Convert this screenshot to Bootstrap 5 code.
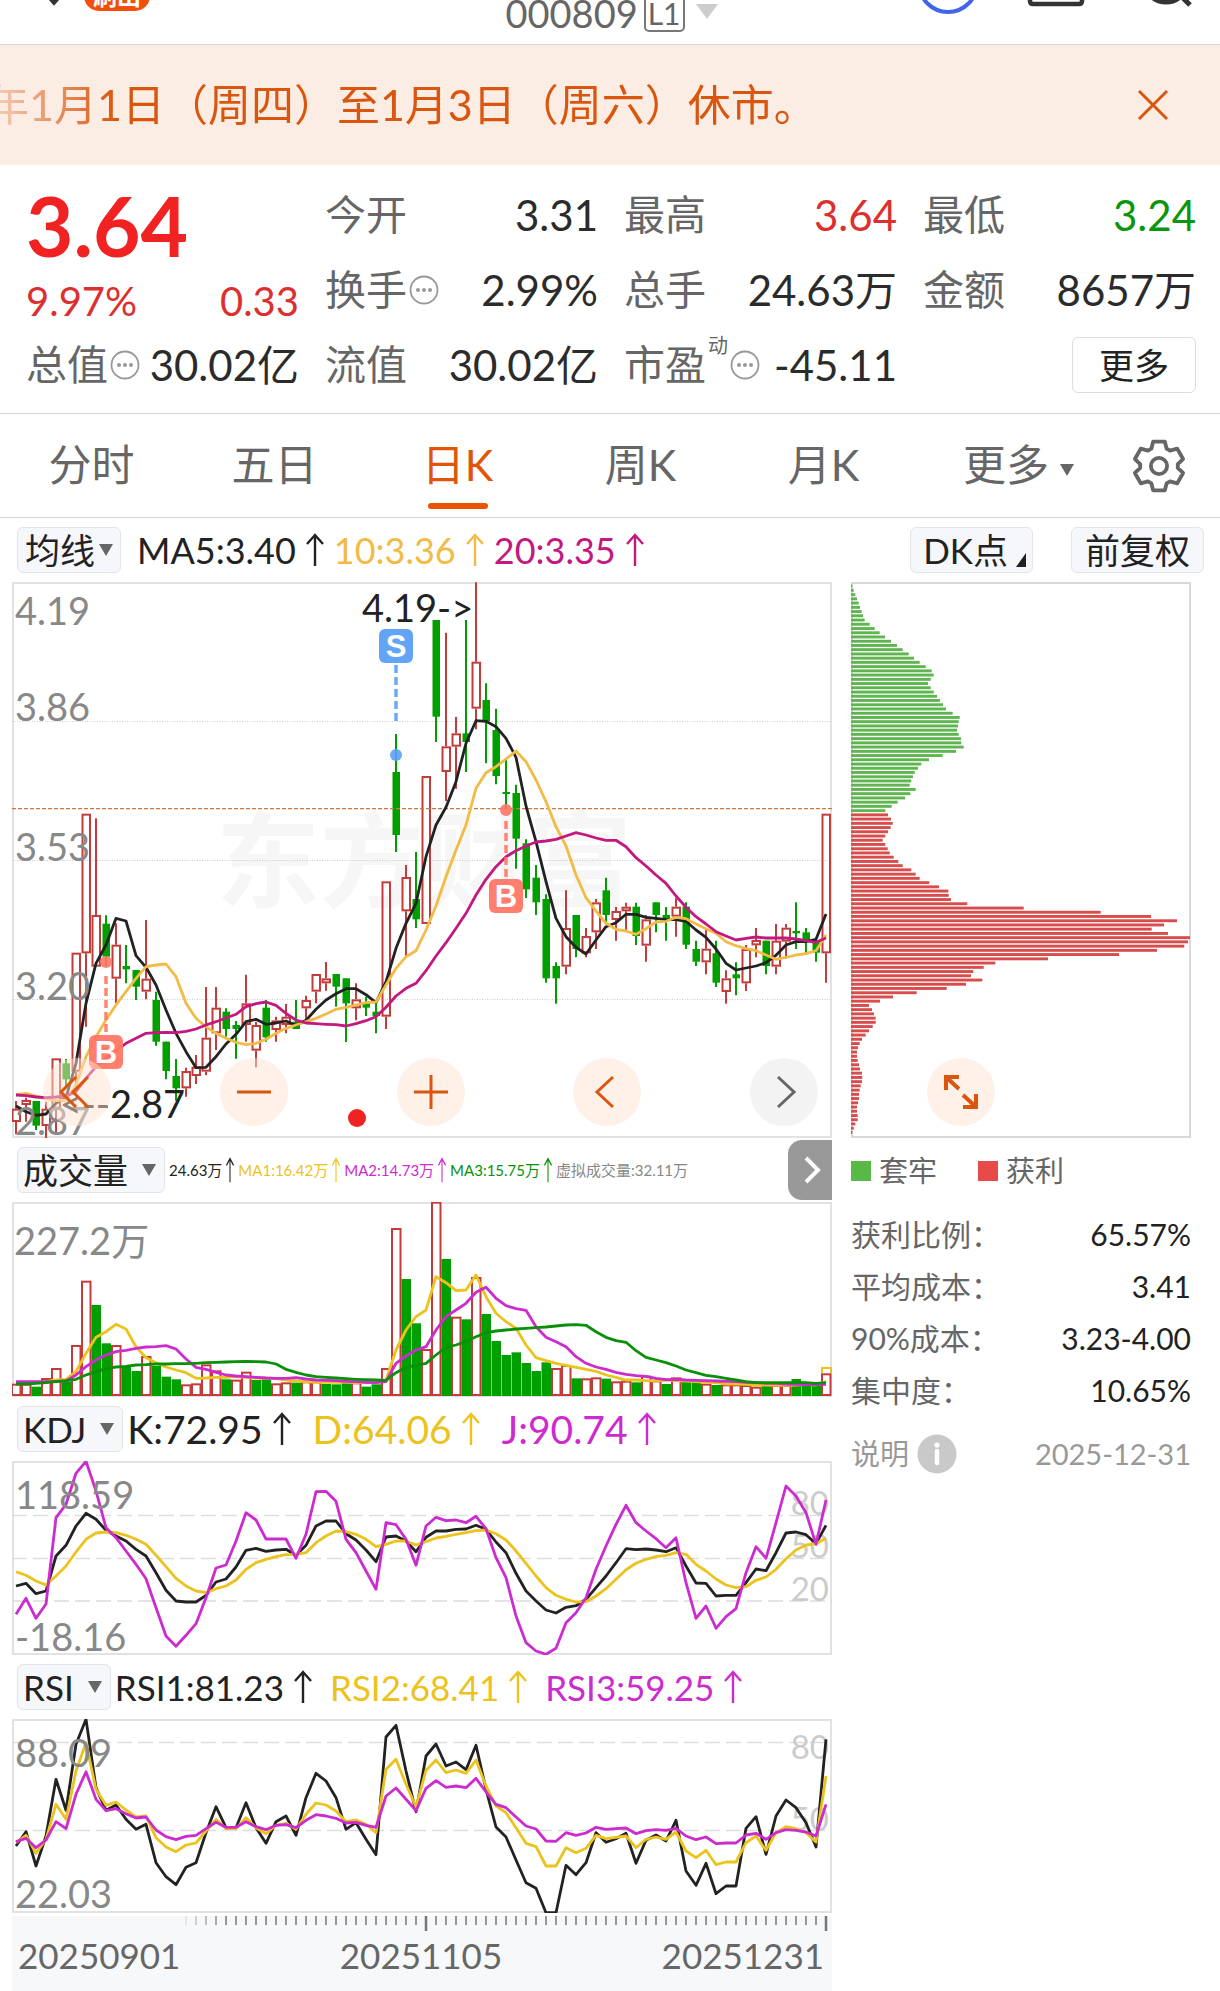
<!DOCTYPE html>
<html lang="zh-CN">
<head>
<meta charset="utf-8">
<meta name="viewport" content="width=device-width, initial-scale=1">
<title>000809 日K</title>
<link href="https://cdn.jsdelivr.net/npm/bootstrap@5.3.0/dist/css/bootstrap.min.css" rel="stylesheet">
<style>
body{font-family:Lato,"Noto Sans CJK SC",sans-serif;color:#222;background:#fff;overflow-x:hidden}
button{font-family:inherit}
svg{display:block}
.topbar{height:45px;border-bottom:1px solid #d5d5d5;overflow:hidden;position:relative}
.topbar .inner{height:60px;margin-top:-17px}
.plain{background:none;border:0;padding:0;color:inherit}
.code-btn{font-size:38px;line-height:60px;color:#666;gap:6px;padding-left:6px}
.lv{font-size:30px;line-height:34px;border:2px solid #777;border-radius:5px;padding:0 2px}
.hot-pill{background:#f2500a;color:#fff;font-size:24px;line-height:30px;border-radius:15px;padding:0 9px;font-weight:700}
.side-l{left:0;top:0;padding-left:20px;height:31px}
.side-r{right:28px;top:0}
.notice{height:120px;background:#fcede4;color:#d9560f}
.notice-text{font-size:43px;line-height:60px;margin-left:-14px;white-space:nowrap;overflow:hidden;-webkit-mask-image:linear-gradient(90deg,rgba(0,0,0,.15),#000 130px);mask-image:linear-gradient(90deg,rgba(0,0,0,.15),#000 130px)}
.close-x{margin-right:47px}
.quote{padding:12px 24px 11px 26px;border-bottom:1px solid #d5d5d5}
.q-grid{display:grid;grid-template-columns:repeat(4,1fr);column-gap:26px;grid-auto-rows:75px}
.cell{display:flex;align-items:center;justify-content:space-between;white-space:nowrap}
.lab{font-size:41px;line-height:60px;color:#666;display:flex;align-items:center;gap:2px}
.lab sup{font-size:20px;top:-20px;line-height:20px}
.val{font-size:42px;line-height:60px;color:#2b2b2b}
.up{color:#dc2f2f}
.down{color:#0a960a}
.big-price{grid-row:span 2;display:flex;flex-direction:column;color:#dc2f2f;font-size:40px;line-height:56px}
.big-price strong{font-size:82px;line-height:96px;color:#f02222;font-weight:700}
.more-btn{width:124px;height:56px;border:1px solid #ddd;border-radius:6px;font-size:35px;line-height:50px;background:#fff;padding:0;color:#222}
.k-tabs{height:104px;border-bottom:1px solid #d5d5d5}
.k-tabs a{width:15%;height:103px;font-size:43px;line-height:102px;color:#666;text-align:center;text-decoration:none;position:relative;white-space:nowrap}
.k-tabs a.active{color:#df560a}
.k-tabs a.active::after{content:"";position:absolute;left:50%;margin-left:-30px;bottom:8px;width:60px;height:6px;border-radius:3px;background:#e85404}
.caret{display:inline-block;border:7px solid transparent;border-top:12px solid #666;border-bottom:0;vertical-align:middle}
.gear{width:52px;margin:0 36px 0 auto}
.ma-row{height:64px;padding:0 16px 0 17px}
.chip{height:46px;border:1px solid #e2e4e8;border-radius:6px;background:#f6f7fa;font-size:35px;line-height:42px;padding:0 7px;color:#222;display:flex;align-items:center;white-space:nowrap;gap:4px}
.chip.wide{gap:14px;padding:0 8px 0 5px}
.chip.vol-chip{gap:14px;padding:0 8px 0 5px}
.chip.dk{gap:8px;padding:0 6px 0 12px}
.chip.adj{padding:0 13px}
.corner{width:10px;height:14px;background:#222;clip-path:polygon(100% 0,100% 100%,0 100%);align-self:flex-end;margin-bottom:5px}
.ind{display:flex;align-items:center;white-space:nowrap;gap:10px}
.ind svg{width:18px;height:34px}
.f36{font-size:36px;line-height:46px}
.f38{font-size:39px;line-height:46px}
.f38 .c-yel:not(svg),.f38 .c-pur:not(svg){margin-left:12px}
.f34{font-size:35px;line-height:46px}
.f34 .c-yel:not(svg),.f34 .c-pur:not(svg){margin-left:8px}
.f16{font-size:15px;line-height:46px}
.f16.ind{gap:4px}
.f16 svg{width:8px;height:26px}
.c-gold{color:#f2bb45}.c-mag{color:#c2187f}.c-yel{color:#ecc21c}.c-pur{color:#cc2bd0}.c-grn{color:#089108}.c-gry{color:#888}
.board{display:grid;grid-template-columns:820fr 340fr;column-gap:19px;padding:0 29px 0 12px}
.pane{position:relative}
.pane svg.plot{width:100%;height:auto}
.ind-row{height:64px;padding-left:5px;position:relative}
.slide-btn{right:0;top:2px;width:44px;height:60px;border:0;border-radius:14px 0 0 14px;background:#999;padding:0 0 0 8px;position:absolute}
.tools{position:absolute;left:0;right:0;bottom:12px;padding:0 14px 0 31px}
.round{width:68px;height:68px;border:0;padding:0;border-radius:50%;background:rgba(255,226,209,.5);color:#d9560f;display:flex;align-items:center;justify-content:center}
.round.off{background:#f3f3f3;color:#666}
.expand{position:absolute;left:76px;bottom:12px}
.live-dot{position:absolute;width:18px;height:18px;border-radius:50%;background:#f02222;left:336px;bottom:11px}
.axis-lab{font-size:38px;fill:#888}
.lvl{font-size:33px;fill:#ccc;text-anchor:end}
.note{font-size:38px;fill:#222}
.flag{font:700 31px "Liberation Sans",sans-serif;fill:#fff;text-anchor:middle}
.wm{font-size:104px;font-weight:700;fill:#f6f6f6}
.dates{background:#f7f8fa;margin-top:3px}
.dates .nums{font-size:35px;line-height:46px;color:#666;padding:0 8px 14px 6px}
.legend-row{height:66px;font-size:29px;line-height:40px;color:#666}
.sw{width:20px;height:20px;margin-right:8px}
.sw-loss{background:#58b947}
.sw-gain{background:#e84a4a;margin-left:41px}
.stat{height:52px;font-size:30px;line-height:40px;color:#666;white-space:nowrap}
.stat dd{color:#222;margin:0}
.stat dt{font-weight:400}
.foot{height:74px;font-size:29px;line-height:40px;color:#999;padding-top:2px}
</style>
<script src="https://cdn.jsdelivr.net/npm/bootstrap@5.3.0/dist/js/bootstrap.bundle.min.js"></script>
</head>
<body>
<svg width="0" height="0" class="position-absolute" aria-hidden="true">
<symbol id="up" viewBox="0 0 18 34" preserveAspectRatio="none"><path d="M9 33V2M1 11L9 2l8 9" fill="none" stroke="currentColor" stroke-width="2.4"/></symbol>
<symbol id="dots" viewBox="0 0 30 30"><circle cx="15" cy="15" r="13.5" fill="none" stroke="#999" stroke-width="1.8"/><g fill="#999"><circle cx="9" cy="15" r="2"/><circle cx="15" cy="15" r="2"/><circle cx="21" cy="15" r="2"/></g></symbol>
</svg>

<header class="topbar">
  <div class="side-l position-absolute d-flex align-items-start">
    <svg width="64" height="20" viewBox="0 0 64 20"><path d="M20 -14L34 2L48 -14" fill="none" stroke="#333" stroke-width="5"/></svg>
    <span class="hot-pill" style="margin-top:-19px">刷出</span>
  </div>
  <div class="inner d-flex justify-content-center">
    <button class="plain code-btn d-flex align-items-center"><span>000809</span><span class="lv">L1</span>
      <svg width="30" height="18" viewBox="0 0 30 18"><path d="M5 0h22L16 15z" fill="#ccc"/></svg></button>
  </div>
  <div class="side-r position-absolute">
    <svg width="276" height="20" viewBox="916 0 276 20" fill="none"><circle cx="948" cy="-17" r="29" stroke="#3f66e8" stroke-width="4"/><path d="M1030 -20V1q0 3 3 3h46q3 0 3-3v-21" stroke="#333" stroke-width="4.500"/><circle cx="1166" cy="-20" r="22" stroke="#333" stroke-width="5"/><path d="M1180 -5l10 10" stroke="#333" stroke-width="5"/></svg>
  </div>
</header>

<section class="notice d-flex align-items-center justify-content-between" role="alert">
  <div class="notice-text">年1月1日（周四）至1月3日（周六）休市。</div>
  <button class="plain close-x" aria-label="关闭"><svg width="40" height="40" viewBox="0 0 40 40"><path d="M6 6l28 28M34 6L6 34" stroke="#d9560f" stroke-width="3"/></svg></button>
</section>

<section class="quote">
  <div class="q-grid">
    <div class="big-price"><strong>3.64</strong><div class="d-flex justify-content-between"><span>9.97%</span><span>0.33</span></div></div>
    <div class="cell"><span class="lab">今开</span><span class="val">3.31</span></div>
    <div class="cell"><span class="lab">最高</span><span class="val up">3.64</span></div>
    <div class="cell"><span class="lab">最低</span><span class="val down">3.24</span></div>
    <div class="cell"><span class="lab">换手<svg width="30" height="30"><use href="#dots"/></svg></span><span class="val">2.99%</span></div>
    <div class="cell"><span class="lab">总手</span><span class="val">24.63万</span></div>
    <div class="cell"><span class="lab">金额</span><span class="val">8657万</span></div>
    <div class="cell"><span class="lab">总值<svg width="30" height="30"><use href="#dots"/></svg></span><span class="val">30.02亿</span></div>
    <div class="cell"><span class="lab">流值</span><span class="val">30.02亿</span></div>
    <div class="cell"><span class="lab">市盈<sup>动</sup><svg width="30" height="30"><use href="#dots"/></svg></span><span class="val">-45.11</span></div>
    <div class="cell justify-content-end"><button class="more-btn">更多</button></div>
  </div>
</section>

<nav class="k-tabs d-flex align-items-center">
  <a href="#">分时</a><a href="#">五日</a><a href="#" class="active">日K</a><a href="#">周K</a><a href="#">月K</a><a href="#" class="ps-4">更多 <span class="caret"></span></a>
  <button class="plain gear" aria-label="设置"><svg width="54" height="54" viewBox="-12 -12 24 24" fill="none" stroke="#666" stroke-width="1.700" stroke-linejoin="round"><path d="M-2.600-10.800H2.600L3.400-7.700 4.900-6.800 8.100-7.700 10.700-3.100 8.350-.880V.880L10.700 3.100 8.100 7.700 4.900 6.800 3.400 7.700 2.600 10.800H-2.600L-3.400 7.700-4.900 6.800-8.100 7.700-10.700 3.100-8.350.880V-.880L-10.700-3.100-8.100-7.700-4.900-6.800-3.400-7.700z"/><circle r="3.600"/></svg></button>
</nav>

<div class="ma-row d-flex align-items-center">
  <button class="chip">均线<span class="caret"></span></button>
  <div class="ind f36 ms-3"><span>MA5:3.40</span><svg><use href="#up"/></svg><span class="c-gold">10:3.36</span><svg class="c-gold"><use href="#up"/></svg><span class="c-mag">20:3.35</span><svg class="c-mag"><use href="#up"/></svg></div>
  <div class="d-flex ms-auto" style="gap:38px"><button class="chip dk">DK点<span class="corner"></span></button><button class="chip adj">前复权</button></div>
</div>

<main class="board">
  <div>
    <div class="pane">
      <svg class="plot" id="price" viewBox="12 582 820 556"></svg>
      <div class="tools d-flex justify-content-between">
        <button class="round" aria-label="最早"><svg width="40" height="40" viewBox="0 0 40 40" fill="none" stroke="currentColor" stroke-width="3"><path d="M19 5L4 20l15 15M31 5L16 20l15 15"/></svg></button>
        <button class="round" aria-label="缩小"><svg width="40" height="40" viewBox="0 0 40 40" stroke="currentColor" stroke-width="3"><path d="M3 20h34"/></svg></button>
        <button class="round" aria-label="放大"><svg width="40" height="40" viewBox="0 0 40 40" stroke="currentColor" stroke-width="3"><path d="M3 20h34M20 3v34"/></svg></button>
        <button class="round" aria-label="向前"><svg width="40" height="40" viewBox="0 0 40 40" fill="none" stroke="currentColor" stroke-width="3"><path d="M26 5L10 20l16 15"/></svg></button>
        <button class="round off" aria-label="向后"><svg width="40" height="40" viewBox="0 0 40 40" fill="none" stroke="currentColor" stroke-width="3"><path d="M14 5l16 15-16 15"/></svg></button>
      </div>
      <span class="live-dot"></span>
    </div>
    <div class="ind-row d-flex align-items-center">
      <button class="chip vol-chip">成交量<span class="caret"></span></button>
      <div class="ind f16 ms-1"><span>24.63万</span><svg><use href="#up"/></svg><span class="c-yel">MA1:16.42万</span><svg class="c-yel"><use href="#up"/></svg><span class="c-pur">MA2:14.73万</span><svg class="c-pur"><use href="#up"/></svg><span class="c-grn">MA3:15.75万</span><svg class="c-grn"><use href="#up"/></svg><span class="c-gry">虚拟成交量:32.11万</span></div>
      <button class="slide-btn" aria-label="展开"><svg width="30" height="36" viewBox="0 0 30 36" fill="none" stroke="#fff" stroke-width="4"><path d="M10 6l12 12-12 12"/></svg></button>
    </div>
    <svg class="plot w-100 h-auto" id="vol" viewBox="12 1202 820 195"></svg>
    <div class="ind-row d-flex align-items-center">
      <button class="chip wide">KDJ<span class="caret"></span></button>
      <div class="ind f38 ms-1"><span>K:72.95</span><svg><use href="#up"/></svg><span class="c-yel">D:64.06</span><svg class="c-yel"><use href="#up"/></svg><span class="c-pur">J:90.74</span><svg class="c-pur"><use href="#up"/></svg></div>
    </div>
    <svg class="plot w-100 h-auto" id="kdj" viewBox="12 1460 820 194"></svg>
    <div class="ind-row d-flex align-items-center">
      <button class="chip wide">RSI<span class="caret"></span></button>
      <div class="ind f34 ms-1"><span>RSI1:81.23</span><svg><use href="#up"/></svg><span class="c-yel">RSI2:68.41</span><svg class="c-yel"><use href="#up"/></svg><span class="c-pur">RSI3:59.25</span><svg class="c-pur"><use href="#up"/></svg></div>
    </div>
    <svg class="plot w-100 h-auto" id="rsi" viewBox="12 1718 820 194"></svg>
    <div class="dates">
      <svg class="w-100 h-auto" id="ticks" viewBox="12 1915 820 16"></svg>
      <div class="nums d-flex justify-content-between"><span>20250901</span><span>20251105</span><span>20251231</span></div>
    </div>
  </div>

  <aside>
    <div class="pane">
      <svg class="plot" id="chips" viewBox="851 582 340 556"></svg>
      <button class="round expand" aria-label="全屏"><svg width="40" height="40" viewBox="0 0 40 40" fill="none" stroke="currentColor" stroke-width="4"><path d="M18 5H5v13M5 5l13 12M22 35h13V22M35 35L22 23"/></svg></button>
    </div>
    <div class="legend-row d-flex align-items-center"><span class="sw sw-loss"></span>套牢<span class="sw sw-gain"></span>获利</div>
    <dl class="m-0 pt-1">
      <div class="stat d-flex align-items-center justify-content-between"><dt>获利比例：</dt><dd>65.57%</dd></div>
      <div class="stat d-flex align-items-center justify-content-between"><dt>平均成本：</dt><dd>3.41</dd></div>
      <div class="stat d-flex align-items-center justify-content-between"><dt>90%成本：</dt><dd>3.23-4.00</dd></div>
      <div class="stat d-flex align-items-center justify-content-between"><dt>集中度：</dt><dd>10.65%</dd></div>
    </dl>
    <div class="foot d-flex align-items-center"><span>说明</span>
      <svg class="ms-2" width="40" height="40" viewBox="0 0 40 40"><circle cx="20" cy="20" r="19.500" fill="#c9c9c9"/><circle cx="20" cy="11" r="2.600" fill="#fff"/><path d="M20 17v12" stroke="#fff" stroke-width="4.500" stroke-linecap="round"/></svg>
      <span class="ms-auto">2025-12-31</span></div>
  </aside>
</main>

<script>
const X = i => 16 + i * 10;
const RED = '#c43c39', GREEN = '#009f00';
const line = (a, base, color, w = 2.8) =>
  `<polyline fill="none" stroke="${color}" stroke-width="${w}" stroke-linejoin="round" points="${a.map((v, i) => X(i) + ',' + (base + v / 3).toFixed(1)).join(' ')}"/>`;
const frame = (x, y, w, h, c = '#e2e2e2') => `<rect x="${x + 1}" y="${y + 1}" width="${w - 2}" height="${h - 2}" fill="none" stroke="${c}" stroke-width="2"/>`;
const dash = (y, pat, c, w = 1) => `<path d="M12 ${y}H832" stroke="${c}" stroke-width="${w}" stroke-dasharray="${pat}"/>`;
const put = (id, s) => document.getElementById(id).innerHTML = s;

// Each candle: direction, high, body top, body bottom, low (third-pixel steps from y = 840)
const candles = `r783,806,846,883 r773,780,795,845 g783,783,857,870 r785,806,858,895 r655,655,806,878 g657,670,718,745 r338,338,695,735 r-79,-79,340,560 r-65,225,380,380 g226,251,350,378
r250,314,416,490 g315,378,388,430 g390,390,440,480 r240,416,455,478 g455,480,605,617 g605,605,693,718 g657,708,745,782 r683,693,745,770 r645,680,708,732 r441,593,695,706
r441,503,580,630 g505,515,567,590 g543,555,567,656 r404,490,555,605 r545,555,632,682 g480,503,592,605 r530,541,570,605 r492,530,555,580 g480,545,567,567 r467,480,505,550
r402,402,455,490 r366,415,430,452 g402,402,440,500 g415,415,490,606 r430,478,505,541 g470,490,503,528 g490,515,528,580 r124,124,530,567 g-318,-204,-15,36 r75,111,214,350
g36,177,238,264 r-192,-192,252,252 g-660,-660,-370,-294 r-622,-281,-204,-117 r-369,-320,-280,-154 g-660,-320,-294,-204 r-773,-535,-394,-332 g-470,-420,-357,-230 g-394,-330,-192,-167 g-240,-144,-138,-95
g-166,-141,-4,86 g-2,10,148,174 g75,113,187,225 g163,177,415,428 g367,378,415,491 r151,264,380,403 g225,225,327,352 r264,288,340,352 r177,187,277,327 g113,151,225,245
r201,213,240,302 r188,200,214,270 g188,200,288,315 r225,238,317,365 g187,187,225,277 g201,225,238,302 r175,200,230,290 g187,200,314,327 g302,327,365,378 r265,326,367,403
g302,340,428,441 r391,415,456,491 g367,403,415,466 r315,327,430,453 r264,300,316,352 g302,302,378,403 r252,302,380,403 r252,263,305,355 g187,273,280,327 g264,277,305,340
g295,302,338,365 r-79,-79,340,428`.split(/\s+/).map(s => [s[0], ...s.slice(1).split(',').map(v => 840 + v / 3)]);
const ma5 = [798,815,826,822,790,772,670,490,370,315,235,243,347,382,435,510,580,635,683,682,650,612,583,545,538,553,549,543,556,541,508,480,461,446,446,464,488,425,325,250,190,50,-45,-98,-175,-290,-358,-356,-340,-305,-248,-102,5,125,235,290,322,342,300,260,248,223,223,232,235,239,239,244,270,292,327,370,390,384,378,368,346,315,305,305,298,222];
const ma10 = [764,760,768,776,782,780,735,650,590,540,495,455,415,380,375,372,410,490,535,560,580,595,607,614,610,598,580,565,555,545,535,522,508,502,495,488,486,435,385,350,332,270,198,110,30,-45,-155,-202,-220,-243,-267,-235,-180,-115,-40,18,105,173,213,250,268,273,283,266,246,244,232,236,252,266,280,305,317,326,332,345,358,352,345,341,332,285];
const ma20 = [765,767,771,773,771,768,755,715,680,655,632,610,595,580,578,577,578,574,567,555,545,534,523,500,491,486,496,520,540,549,551,553,554,558,551,542,530,502,468,445,430,392,348,308,265,220,165,118,80,50,32,18,6,3,-2,-12,-22,-15,-6,1,1,20,53,78,105,130,168,202,230,252,275,288,300,295,291,294,294,294,297,302,307,294];
const lab = (x, y, t, c = 'axis-lab') => `<text x="${x}" y="${y}" class="${c}">${t}</text>`;
const flag = (x, y, t, c, y1, y2, dot) => `<path d="M${x} ${y1}V${y2}" stroke="${c}" stroke-width="3.5" stroke-dasharray="8 4" opacity=".9"/><circle cx="${x}" cy="${dot}" r="6" fill="${c}" opacity=".9"/><rect x="${x - 17}" y="${y}" width="34" height="34" rx="6" fill="${c}" opacity=".95"/><text x="${x}" y="${y + 28}" class="flag">${t}</text>`;

put('price',
  `<text x="216" y="900" class="wm">东方财富</text>` + frame(12, 582, 820, 556) +
  [721.5, 860.5, 999.5].map(y => dash(y, '1 1.500', '#ccc')).join('') +
  candles.map(([d, h, t, b, l], i) => {
    const x = X(i), c = d === 'r' ? RED : GREEN;
    return d === 'r'
      ? `<path d="M${x} ${h}V${t}M${x} ${b}V${l}" stroke="${c}" stroke-width="2"/><rect x="${x - 3.5}" y="${t + 1}" width="7.500" height="${Math.max(b - t - 2, 1)}" fill="none" stroke="${c}" stroke-width="2"/>`
      : `<path d="M${x} ${h}V${l}" stroke="${c}" stroke-width="2"/><rect x="${x - 3.5}" y="${t}" width="7.500" height="${b - t}" fill="${c}"/>`;
  }).join('') +
  dash(808.7, '4 2', '#c9793f', 1.3) +
  line(ma5, 840, '#222') + line(ma10, 840, '#f2bb45') + line(ma20, 840, '#c2187f') +
  flag(396, 629, 'S', '#5b9ff5', 665, 721, 755) + flag(506, 879, 'B', '#ff7765', 821, 877, 810) + flag(106, 1035, 'B', '#ff7765', 976, 1033, 962) +
  [[625, '4.19'], [721, '3.86'], [861, '3.53'], [1000, '3.20'], [1135, '2.87']].map(([y, t]) => lab(15, y, t)).join('') +
  lab(362, 622, '4.19-&gt;', 'note') + `<text x="185" y="1118" text-anchor="end" class="note">&lt;--2.87</text>`);

const vol = 'r764 r764 g770 r747 r717 g755 r648 r455 g525 g640 r648 g708 g723 r681 g708 g740 g748 r766 r763 r706 r724 g748 r752 r728 g750 g748 r763 r760 g758 r757 r757 g762 g763 g758 r760 g770 g763 r717 r297 g447 g580 r660 r218 g387 r563 g568 r444 g552 g633 g675 g667 g699 g723 g697 r717 r708 g745 r748 r745 g746 r757 r755 g757 r740 r754 g762 r745 g755 g757 r764 g765 r766 r766 r768 r773 g768 r768 r768 g747 g765 g767 r733'.split(' ');
const v1 = [757,757,757,755,750,748,725,670,622,605,583,597,650,683,698,711,720,728,745,744,742,742,740,742,744,744,746,750,753,755,757,757,757,757,758,758,757,750,660,600,560,540,440,458,482,480,435,500,550,575,595,645,683,692,700,706,712,718,724,735,742,750,750,752,753,750,752,753,755,757,758,762,762,763,765,765,766,766,765,763,765,755];
const v2 = [755,755,755,755,754,753,735,710,690,675,665,661,655,651,650,647,657,687,712,718,727,735,738,740,742,744,745,745,743,747,750,751,752,754,755,757,758,755,700,678,660,650,600,560,540,520,487,472,505,527,536,541,590,622,635,650,680,700,711,718,727,733,737,739,745,749,748,750,751,752,753,754,755,757,758,760,760,762,763,764,764,763];
const v3 = [762,762,760,758,755,752,748,735,725,716,711,709,705,704,702,702,701,701,700,698,697,696,695,694,695,696,702,718,727,735,740,742,744,746,748,749,750,751,728,712,706,700,675,652,645,635,620,608,603,600,597,595,593,591,588,585,584,586,605,622,632,637,662,682,690,698,708,720,728,736,740,745,750,755,758,758,758,758,758,758,760,758];
put('vol', frame(12, 1202, 820, 195) +
  vol.map((s, i) => {
    const y = 1130 + s.slice(1) / 3, x = X(i), h = 1396 - y;
    return s[0] === 'r' ? `<rect x="${x - 4}" y="${y}" width="8.500" height="${h - 1}" fill="#fff" stroke="${RED}" stroke-width="2"/>` : `<rect x="${x - 4.5}" y="${y}" width="9.500" height="${h}" fill="${GREEN}"/>`;
  }).join('') + `<path d="M822 1373v-5h9v5" fill="none" stroke="#ecc21c" stroke-width="2"/>` +
  line(v1, 1130, '#ecc21c') + line(v2, 1130, '#cc2bd0') + line(v3, 1130, '#089108') + lab(14, 1255, '227.2万'));

const k = [570,562,593,585,480,448,390,352,370,403,420,435,460,480,530,583,615,618,618,598,558,549,513,463,457,466,462,460,478,448,390,375,375,413,432,462,497,423,420,435,467,424,405,405,400,399,388,400,438,470,532,585,615,642,651,634,629,610,575,540,500,458,461,459,462,467,455,510,561,562,600,598,598,560,519,524,470,411,408,416,443,388];
const d = [527,538,555,567,540,510,468,430,411,408,410,418,430,445,478,512,547,570,585,590,578,570,552,520,500,490,482,476,475,470,440,420,405,407,415,430,452,445,435,435,447,437,426,421,415,410,404,402,413,432,465,502,540,575,598,610,618,617,600,578,550,521,502,490,482,478,470,475,505,525,549,567,575,572,553,543,520,488,462,447,443,427];
const j = [655,607,667,624,365,325,232,196,285,395,425,465,505,548,635,720,751,718,683,605,516,507,435,350,372,429,429,429,487,415,287,286,316,430,470,525,580,380,386,430,508,390,364,374,372,380,361,398,485,545,660,740,765,775,757,680,650,605,520,450,385,328,380,405,428,455,425,560,667,630,697,662,638,530,452,487,380,270,300,350,445,312];
put('kdj', frame(12, 1460, 820, 194) + [1514.5, 1557.5, 1600].map(y => dash(y, '15 6', '#ddd', 1.5)).join('') +
  lab(829, 1514, '80', 'lvl') + lab(829, 1557, '50', 'lvl') + lab(829, 1600, '20', 'lvl') +
  line(k, 1395, '#222') + line(d, 1395, '#ecc21c') + line(j, 1395, '#cc2bd0') + lab(15, 1508, '118.59') + lab(15, 1650, '-18.16'));

const r1 = [570,527,630,540,370,463,265,190,395,463,447,490,520,505,620,662,686,634,620,530,452,515,515,440,515,562,497,480,538,425,352,375,425,520,500,550,596,243,208,345,467,300,264,330,318,341,268,400,513,543,612,680,697,770,770,628,656,620,530,559,548,532,622,553,537,555,493,645,688,622,713,690,690,517,482,595,480,432,455,500,573,250];
const r2 = [560,538,592,550,445,490,345,260,400,448,438,462,483,480,545,573,587,567,561,525,490,518,518,485,515,533,508,502,520,475,441,447,465,497,492,505,530,340,310,385,452,343,312,350,342,352,312,390,450,470,515,562,572,630,630,575,590,577,538,548,544,540,575,550,543,550,528,585,605,583,626,618,618,560,540,583,530,512,518,530,558,360];
const r3 = [557,547,575,552,497,518,415,347,430,464,458,473,486,483,522,542,551,541,538,518,499,514,514,497,512,521,508,506,515,493,476,480,487,501,499,508,514,420,396,430,464,397,374,394,390,395,367,408,445,455,483,510,519,555,556,530,538,531,514,520,518,516,533,524,521,523,517,540,551,543,563,561,561,537,532,550,530,521,523,528,540,445];
put('rsi', frame(12, 1718, 820, 194) + [1741.5, 1829.5].map(y => dash(y, '15 6', '#ddd', 1.5)).join('') +
  lab(829, 1758, '80', 'lvl') + lab(829, 1830, '50', 'lvl') +
  line(r1, 1655, '#222') + line(r2, 1655, '#ecc21c') + line(r3, 1655, '#cc2bd0') + lab(15, 1766, '88.09') + lab(15, 1907, '22.03'));

let t = '';
for (let i = 17; i < 82; i++) {
  const major = i === 41 || i === 81;
  t += `<path d="M${X(i)} 1915v${major ? 15 : 9}" stroke="#777" stroke-width="${major ? 2.5 : 1.5}" opacity="${Math.min(1, (i - 16) / 5)}"/>`;
}
put('ticks', t);

// Cost distribution: bar ends from the highest price level down; first 54 levels lie above the current price
const cost = [37,41,46,51,56,60,65,69,74,89,104,119,135,153,171,188,206,222,239,257,275,281,272,264,272,281,291,300,309,318,338,359,356,354,351,356,363,364,371,348,308,267,244,234,224,219,214,209,227,211,195,173,155,136,
144,153,158,152,144,136,128,136,143,149,161,175,188,214,227,239,268,297,325,326,333,382,551,782,933,1011,972,935,984,1050,1044,1033,951,837,624,466,431,400,393,427,378,320,230,159,120,87,96,102,107,107,98,87,77,66,59,54,51,51,53,57,60,66,67,66,62,59,57,57,54,51,51,53,53,46,41,37];
put('chips', frame(851, 582, 340, 556, '#ccc').replace('stroke-width="2"', 'stroke-width="1.5"') +
  cost.map((w, i) => `<rect x="851" y="${(584.7 + i * 4.235).toFixed(1)}" width="${((w - 33) / 3).toFixed(1)}" height="2.900" fill="${i < 54 ? '#5fb54f' : '#d84c4c'}"/>`).join(''));
</script>
</body>
</html>
